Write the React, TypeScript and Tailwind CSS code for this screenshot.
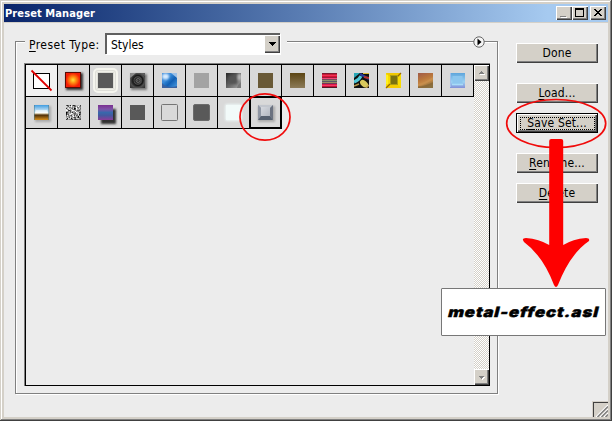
import type { ReactNode } from "react";

// ── Swatches (31x31 drawing area inside each cell) ───────────────────────────

function Defs() {
  return (
    <svg width="0" height="0" className="absolute">
      <defs>
        <radialGradient id="sun">
          <stop offset="0" stopColor="#ffe13a" />
          <stop offset=".45" stopColor="#ff8a10" />
          <stop offset="1" stopColor="#f51e05" />
        </radialGradient>
        <radialGradient id="rings" cx=".5" cy=".5" r=".7">
          <stop offset="0" stopColor="#555" />
          <stop offset=".2" stopColor="#1c1c1c" />
          <stop offset=".35" stopColor="#4c4c4c" />
          <stop offset=".5" stopColor="#222" />
          <stop offset=".68" stopColor="#505050" />
          <stop offset="1" stopColor="#2b2b2b" />
        </radialGradient>
        <linearGradient id="blueGel" x1="0" y1="0" x2="1" y2="1">
          <stop offset="0" stopColor="#0b4fa6" />
          <stop offset=".3" stopColor="#3d93e0" />
          <stop offset=".6" stopColor="#1260b4" />
          <stop offset="1" stopColor="#4fa0e4" />
        </linearGradient>
        <linearGradient id="smoke" x1="0" y1="0" x2="1" y2="1">
          <stop offset="0" stopColor="#262626" />
          <stop offset=".55" stopColor="#6b6b6b" />
          <stop offset="1" stopColor="#a8a8a8" />
        </linearGradient>
        <linearGradient id="umber" x1="0" y1="0" x2="0" y2="1">
          <stop offset="0" stopColor="#5c4513" />
          <stop offset="1" stopColor="#8c7b58" />
        </linearGradient>
        <linearGradient id="rust" x1="0" y1="0" x2=".4" y2="1">
          <stop offset="0" stopColor="#a05a48" />
          <stop offset=".45" stopColor="#b8763c" />
          <stop offset=".7" stopColor="#c88a46" />
          <stop offset="1" stopColor="#8a7040" />
        </linearGradient>
        <linearGradient id="ice" x1="0" y1="0" x2="0" y2="1">
          <stop offset="0" stopColor="#5ea5dc" />
          <stop offset=".6" stopColor="#9cd2f2" />
          <stop offset="1" stopColor="#8290d8" />
        </linearGradient>
        <linearGradient id="horizon" x1="0" y1="0" x2="0" y2="1">
          <stop offset="0" stopColor="#3f9ce0" />
          <stop offset=".5" stopColor="#f0f8fa" />
          <stop offset=".6" stopColor="#c9b690" />
          <stop offset=".66" stopColor="#4a2c08" />
          <stop offset="1" stopColor="#d8901c" />
        </linearGradient>
        <linearGradient id="dusk" x1="0" y1="0" x2="0" y2="1">
          <stop offset="0" stopColor="#7a3090" />
          <stop offset=".28" stopColor="#7f52a8" />
          <stop offset=".5" stopColor="#3868ac" />
          <stop offset=".7" stopColor="#4558a0" />
          <stop offset="1" stopColor="#8a3c98" />
        </linearGradient>
        <linearGradient id="steel" x1="0" y1="0" x2="1" y2="1">
          <stop offset="0" stopColor="#d6d9df" />
          <stop offset="1" stopColor="#b2b7c0" />
        </linearGradient>
        <filter id="soft" x="-30%" y="-30%" width="160%" height="160%">
          <feGaussianBlur stdDeviation="1" />
        </filter>
        <filter id="grain" x="0" y="0" width="100%" height="100%" colorInterpolationFilters="sRGB">
          <feTurbulence type="fractalNoise" baseFrequency=".6" numOctaves="2" seed="4" />
          <feColorMatrix values="2.4 0 0 0 -.6  2.4 0 0 0 -.6  2.4 0 0 0 -.6  0 0 0 0 1" />
        </filter>
        <clipPath id="tile">
          <rect x="8" y="8" width="15" height="15" />
        </clipPath>
      </defs>
    </svg>
  );
}

function Box({ fill }: { fill: string }) {
  return <rect x="8" y="8" width="15" height="15" fill={fill} />;
}

const weave = [
  "#7c1830", "#c81c34", "#f03058", "#d81030", "#a01838", "#f04878", "#784858", "#8c9068",
  "#585868", "#9c8c60", "#703858", "#e01848", "#f43868", "#c01030", "#501828",
];

const rowOne: ReactNode[] = [
  <>
    <rect x="7.5" y="8.5" width="16" height="15" fill="#fff" stroke="#000" />
    <path d="M5.5 5.5 L25.5 25.5" stroke="#e00000" strokeWidth="1.8" />
  </>,
  <>
    <rect x="8" y="8" width="17" height="17" fill="#333" filter="url(#soft)" />
    <rect x="7" y="7" width="16" height="16" fill="#5a0a04" />
    <rect x="8" y="8" width="14" height="14" fill="url(#sun)" />
  </>,
  <>
    <rect x="4" y="4" width="23" height="23" rx="4" fill="#deded8" stroke="#f5f5ee" strokeWidth="2" />
    <rect x="6.5" y="6.5" width="18" height="18" rx="1" fill="none" stroke="#f0f0e8" />
    <Box fill="#595959" />
  </>,
  <>
    <rect x="9" y="9" width="16" height="16" fill="#777" filter="url(#soft)" />
    <rect x="8" y="8" width="15" height="15" fill="url(#rings)" />
    <path d="M8 8 h6 l-6 5z" fill="#aaa" opacity=".7" />
    <path d="M18 8 h5 v3z" fill="#777" opacity=".6" />
    <circle cx="16" cy="15.5" r="5" fill="none" stroke="#111" opacity=".8" />
    <circle cx="16" cy="15.5" r="2" fill="none" stroke="#6a6a6a" />
  </>,
  <g clipPath="url(#tile)">
    <Box fill="url(#blueGel)" />
    <path d="M7 19 Q14 17 17 8 L7 7z" fill="#3c8ad8" />
    <ellipse cx="11.5" cy="11.5" rx="3.5" ry="3" fill="#d8ecff" filter="url(#soft)" />
    <path d="M17 8 h6 v5z" fill="#9cc0e6" />
    <path d="M8 18 Q13 24 23 21 V23 H8z" fill="#3a62a0" />
  </g>,
  <Box fill="#a3a3a3" />,
  <g clipPath="url(#tile)">
    <Box fill="url(#smoke)" />
    <rect x="11" y="11" width="8" height="8" fill="#555" filter="url(#soft)" />
    <ellipse cx="21.5" cy="12" rx="2" ry="3.5" fill="#bbb" filter="url(#soft)" />
    <path d="M20 20 L23 17 V23 H19z" fill="#777" />
  </g>,
  <Box fill="#695936" />,
  <Box fill="url(#umber)" />,
  <>
    {weave.map((c, i) => <rect key={i} x="8" y={8 + i} width="15" height="1" fill={c} />)}
  </>,
  <g clipPath="url(#tile)">
    <Box fill="#101010" />
    <path d="M8 8 H14 L8 13z" fill="#28a8b8" />
    <path d="M8 17 Q13 15 15 11" fill="none" stroke="#50c8d8" strokeWidth="3" />
    <path d="M14 9 L23 14" stroke="#283898" strokeWidth="2.4" />
    <path d="M18 12 L23 13" stroke="#b83028" strokeWidth="2" />
    <ellipse cx="18.5" cy="18.5" rx="4.5" ry="3" transform="rotate(40 18 18)" fill="#d8c85c" />
    <path d="M8 21 L13 19 M20 23 L23 20" stroke="#b89848" strokeWidth="1.5" />
    <path d="M17 8.5 H23" stroke="#d8b830" />
  </g>,
  <>
    <Box fill="#f9dc00" />
    <path d="M8 8 H23 L19 12 H12z" fill="#f0c800" />
    <path d="M8 23 L12 19 H19 L23 23z" fill="#f4cc00" />
    <path d="M8 23 L12 19 M19 12 L23 8" stroke="#9a6800" strokeWidth="1.3" />
    <rect x="12" y="10" width="8" height="10" fill="#b0a010" />
    <rect x="13" y="11" width="6" height="8" fill="#7a720e" />
    <path d="M9 10 V19" stroke="#fff020" strokeWidth="2" />
  </>,
  <g clipPath="url(#tile)">
    <Box fill="url(#rust)" />
    <path d="M8 20 Q15 19 23 13" fill="none" stroke="#c89050" strokeWidth="2" opacity=".7" />
    <path d="M8 22.5 Q16 22 23 18" fill="none" stroke="#8c6a38" strokeWidth="2" />
  </g>,
  <>
    <Box fill="url(#ice)" />
    <rect x="10.5" y="11" width="10" height="8" fill="#8cc6ee" />
    <path d="M8.5 8 V22" stroke="#a0c0ec" />
    <path d="M10 19.5 H21" stroke="#a8dcf8" strokeWidth="1.5" />
  </>,
];

const rowTwo: ReactNode[] = [
  <>
    <rect x="9" y="9" width="16" height="16" fill="#aaa" filter="url(#soft)" />
    <Box fill="url(#horizon)" />
    <path d="M10 13 h11 v3 h-11z" fill="#fff" opacity=".5" />
    <path d="M8.5 8 V23 M22.5 8 V23" stroke="#4a7888" opacity=".5" />
  </>,
  <>
    <rect x="8" y="8" width="15" height="15" filter="url(#grain)" />
    <path d="M8 22.5 H23 M22.5 8 V23" stroke="#555" opacity=".5" />
  </>,
  <>
    <rect x="11" y="12" width="15" height="15" fill="#333" filter="url(#soft)" />
    <Box fill="url(#dusk)" />
  </>,
  <Box fill="#595959" />,
  <rect x="7.5" y="7.5" width="16" height="16" rx="1" fill="none" stroke="#757575" />,
  <rect x="7.5" y="7.5" width="16" height="16" rx="1.5" fill="#595959" stroke="#6c6c6c" />,
  <>
    <rect x="7" y="7" width="17" height="17" rx="2" fill="#ecf6f5" filter="url(#soft)" />
    <Box fill="#f2faf9" />
  </>,
  <>
    <rect x="8" y="9" width="17" height="16" fill="#aaa" filter="url(#soft)" />
    <rect x="8" y="8" width="15" height="15" fill="#a5abb5" />
    <path d="M8 8 H23 L20 11 H11z" fill="#c2c6cd" />
    <path d="M8 8 L11 11 V19 L8 23z" fill="#8f96a3" />
    <path d="M23 8 L20 11 V19 L23 23z" fill="#6b7280" />
    <path d="M8 23 L11 19 H20 L23 23z" fill="#56606f" />
    <rect x="11" y="10" width="9" height="9" fill="url(#steel)" />
  </>,
];

function Cell({ children, first, selected }: { children: ReactNode; first?: boolean; selected?: boolean }) {
  return (
    <div className={`relative h-8 w-8 border-r border-b border-black ${first ? "bg-[#f1f1f1]" : "bg-[#d9d9d9]"}`}>
      <svg width="31" height="31" viewBox="0 0 31 31" className="block">{children}</svg>
      {selected && <div className="absolute -top-px -left-px h-[33px] w-[33px] border-2 border-black" />}
    </div>
  );
}

// ── Controls ──────────────────────────────────────────────────────────────────

function PushButton({ hot, rest, focused, className = "" }: { hot: string; rest: string; focused?: boolean; className?: string }) {
  return (
    <button
      className={`flex h-5 w-[82px] items-center justify-center bg-[#d4d0c8] text-[12px] leading-none tracking-[0.15px] ${
        focused
          ? "border border-black shadow-[inset_1px_1px_0_#fff,inset_-1px_-1px_0_#404040,inset_-2px_-2px_0_#808080]"
          : "pb-px shadow-[inset_1px_1px_0_#fff,inset_-1px_-1px_0_#404040,inset_-2px_-2px_0_#808080]"
      } ${className}`}
    >
      <span className={focused ? "flex h-[13px] w-[75px] items-center justify-center border border-dotted border-black" : ""}>
        <span className={focused ? "-mt-px" : ""}>
          <span className={hot ? "underline underline-offset-2" : ""}>{hot}</span>
          {rest}
        </span>
      </span>
    </button>
  );
}

function TitleButton({ children }: { children: ReactNode }) {
  return (
    <div className="h-[14px] w-4 bg-[#d4d0c8] shadow-[inset_1px_1px_0_#fff,inset_-1px_-1px_0_#404040,inset_-2px_-2px_0_#808080]">
      <svg width="16" height="14" shapeRendering="crispEdges" className="block">{children}</svg>
    </div>
  );
}

function ScrollButton({ down }: { down?: boolean }) {
  return (
    <div className="h-4 w-[15px] bg-[#d4d0c8] shadow-[inset_1px_1px_0_#fff,inset_-1px_-1px_0_#404040,inset_-2px_-2px_0_#808080]">
      <svg width="15" height="16" shapeRendering="crispEdges" className="block">
        {down ? (
          <>
            <path d="M6 8h5v1h-1v1h-1v1h-1v-1h-1v-1h-1z" fill="#fff" />
            <path d="M5 7h5v1h-1v1h-1v1h-1v-1h-1v-1h-1z" fill="#808080" />
          </>
        ) : (
          <>
            <path d="M6 9h5v1h-5z" fill="#fff" />
            <path d="M7 6h1v1h1v1h1v1h-5v-1h1v-1h1z" fill="#808080" />
          </>
        )}
      </svg>
    </div>
  );
}

// ── Markup drawn over the dialog ──────────────────────────────────────────────

function Annotations() {
  return (
    <>
      <svg width="612" height="421" className="pointer-events-none absolute top-0 left-0">
        <g fill="none" stroke="#f00b0b" strokeWidth="1.7">
          <ellipse cx="265" cy="117" rx="25" ry="23.2" />
          <ellipse cx="556.2" cy="123.5" rx="49.5" ry="24" />
        </g>
        <path
          d="M549.2 141 q0-2 2-2 h10 q2 0 2 2 V245 Q573 239 586 238 Q590 238 589 241 Q570 254 558 285 Q556 289 554 285 Q543 256 524 242 Q521 238 526 238 Q539 239 549.2 245z"
          fill="#fe0000"
        />
      </svg>
      <div className="absolute top-[288px] left-[441px] flex h-12 w-[165px] items-center justify-center rounded-[1px] border border-[#777] bg-white font-['Inter',sans-serif] text-[14px] font-black text-black">
        <span className="scale-x-120 -skew-x-12 pb-px tracking-[0.7px] [-webkit-text-stroke:0.4px_#000]">metal-effect.asl</span>
      </div>
    </>
  );
}

// ── Dialog ────────────────────────────────────────────────────────────────────

export default function App() {
  return (
    <div className="relative h-[421px] w-[612px] overflow-hidden bg-[#ececec] p-1 font-['DejaVu_Sans_Condensed','DejaVu_Sans',sans-serif] text-black shadow-[inset_-1px_-1px_0_#404040,inset_1px_1px_0_#d4d0c8,inset_-2px_-2px_0_#808080,inset_2px_2px_0_#fff,inset_0_0_0_4px_#d4d0c8]">
      <Defs />

      {/* Title bar */}
      <div className="flex h-[18px] items-center bg-linear-to-r from-[#0a246a] to-[#a6caf0] to-90% pr-[2px] pl-[1px]">
        <span className="text-[11px] leading-none font-bold tracking-[0.1px] text-white">Preset Manager</span>
        <div className="ml-auto flex">
          <TitleButton>
            <path d="M5 11h6v1h-6z" fill="#fff" />
            <path d="M4 10h6v1h-6z" fill="#808080" />
          </TitleButton>
          <TitleButton><path fillRule="evenodd" d="M3 2h9v9h-9z M4 4v6h7v-6z" /></TitleButton>
          <div className="w-[2px]" />
          <TitleButton>
            <path d="M4 3h2v1h1v1h2v-1h1v-1h2v1h-1v1h-1v1h-1v1h1v1h1v1h1v1h-2v-1h-1v-1h-2v1h-1v1h-2v-1h1v-1h1v-1h1v-1h-1v-1h-1v-1h-1z" />
          </TitleButton>
        </div>
      </div>
      <div className="h-px bg-[#d4d0c8]" />

      <div className="flex pl-[11px]">
        {/* Group box */}
        <div className="mt-[18px] h-[353px] w-[483px] border border-[#808080] shadow-[1px_1px_0_#fff,inset_1px_1px_0_#fff]">
          <div className="-mt-[9px] flex h-[22px]">
            <label className="ml-[9px] flex w-[80px] items-center bg-[#ececec] pt-px pl-1 text-[12px] leading-none tracking-[0.45px] whitespace-nowrap">
              <span><span className="underline underline-offset-2">P</span>reset Type:</span>
            </label>
            <div className="flex w-[182px] bg-[#ececec]">
              <div className="flex h-[21px] w-[175px] border-t-2 border-l-2 border-[#606060] bg-white shadow-[1px_1px_0_#fff]">
                <span className="flex flex-1 items-center pl-1 text-[12px] leading-none">Styles</span>
                <div className="flex h-[18px] w-4 items-center justify-center bg-[#d4d0c8] shadow-[inset_1px_1px_0_#fff,inset_-1px_-1px_0_#404040,inset_-2px_-2px_0_#808080]">
                  <svg width="7" height="4" shapeRendering="crispEdges">
                    <path d="M0 0h7v1h-1v1h-1v1h-1v1h-1v-1h-1v-1h-1v-1h-1z" />
                  </svg>
                </div>
              </div>
            </div>
            <svg width="12" height="12" className="mt-[3px] mr-[12px] ml-auto block">
              <circle cx="6" cy="6" r="5.2" fill="#f5f5f5" stroke="#666" />
              <path d="M4.5 2.5v7l4-3.5z" />
            </svg>
          </div>

          {/* Preset list */}
          <div className="mt-2 ml-2 h-[323px] w-[466px] border-t border-l border-[#808080]">
            <div className="flex h-[322px] border border-black">
              <div className="w-[448px]">
                <div className="flex">
                  {rowOne.map((art, i) => <Cell key={i} first={i === 0}>{art}</Cell>)}
                </div>
                <div className="flex">
                  {rowTwo.map((art, i) => <Cell key={i} selected={i === 7}>{art}</Cell>)}
                </div>
              </div>
              <div className="flex w-[15px] flex-col justify-between bg-[conic-gradient(#fff_25%,#d4d0c8_0_50%,#fff_0_75%,#d4d0c8_0)] bg-size-[2px_2px]">
                <ScrollButton />
                <ScrollButton down />
              </div>
            </div>
          </div>
        </div>

        {/* Actions */}
        <div className="mt-5 ml-[18px] flex flex-col">
          <PushButton hot="" rest="Done" />
          <PushButton hot="L" rest="oad..." className="mt-5" />
          <PushButton hot="S" rest="ave Set..." focused className="mt-2.5" />
          <PushButton hot="R" rest="ename..." className="mt-5" />
          <PushButton hot="D" rest="elete" className="mt-2.5" />
        </div>
      </div>

      {/* Resize grip */}
      <svg width="16" height="16" className="absolute right-1 bottom-1" shapeRendering="crispEdges">
        <path d="M0 0h16v16h-16z" fill="#d4d0c8" />
        <path d="M1.5 16V1.5H16" fill="none" stroke="#404040" />
        <g shapeRendering="auto">
          <path d="M4 16L16 4M8 16L16 8M12 16L16 12" stroke="#fff" strokeWidth="1.2" />
          <path d="M5.5 16L16 5.5M9.5 16L16 9.5M13.5 16L16 13.5" stroke="#808080" strokeWidth="1.5" />
        </g>
      </svg>

      <Annotations />
    </div>
  );
}
